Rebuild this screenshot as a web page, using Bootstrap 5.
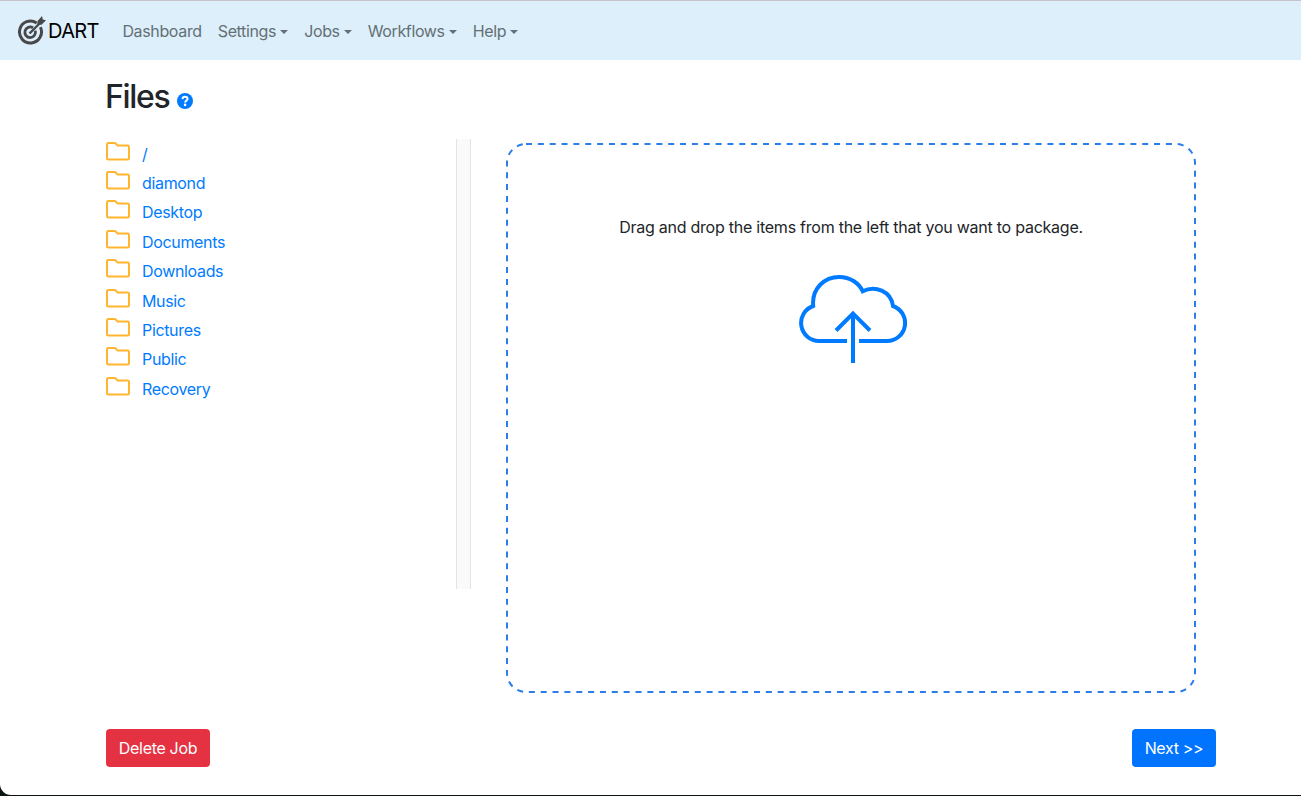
<!DOCTYPE html>
<html lang="en">
<head>
<meta charset="utf-8">
<meta name="viewport" content="width=device-width, initial-scale=1">
<title>DART</title>
<link href="https://cdn.jsdelivr.net/npm/bootstrap@5.3.0/dist/css/bootstrap.min.css" rel="stylesheet">
<style>
  html { background: #0c1413; }
  body { font-family: Inter, "Liberation Sans", sans-serif; font-size: 16px; letter-spacing: -.32px; color: #212529; background: #0c1413; height: 796px; overflow: hidden; }
  .app-window { height: 795px; background: #fff; border-bottom-left-radius: 11px; overflow: hidden; }
  .app-bar { height: 60px; background: #dceffb; border-top: 1px solid #c3c5c7; padding: 0 0 0 17px; }
  .app-bar .navbar-brand { font-size: 20px; letter-spacing: -.6px; color: #000; margin-right: 15.5px; padding: 0; }
  .app-bar .nav-link { color: #646f75; padding: 0 8px; white-space: nowrap; line-height: 24px; letter-spacing: -.36px; }
  .app-bar .dropdown-toggle::after { margin-left: 4px; vertical-align: 3px; }
  .page { width: 1110px; margin-left: 106px; }
  .page h1 { font-size: 32px; line-height: 38px; font-weight: 500; letter-spacing: -1.3px; padding-top: 18px; margin: 0 0 0 -1px; }
  .help { margin: 15px 0 0 7px; }
  .browser { width: 365px; height: 450px; margin-top: 23px; }
  .scroll-track { width: 15px; background: #fafafa; border: solid #e4e4e4; border-width: 0 1px; }
  .folder-list { margin-top: -.3px; }
  .folder { height: 29.4px; gap: 12px; color: #007bff; text-decoration: none; }
  .folder span { line-height: 24px; padding-top: 3px; letter-spacing: -.34px; }
  .folder svg { margin-top: 2px; }
  .drop-zone { width: 690px; height: 550px; margin: 83px 0 0 35px; position: relative; padding-top: 72px; }
  .drop-outline { position: absolute; inset: 0; }
  .drop-zone p { margin-bottom: 35px; line-height: 24px; letter-spacing: -.245px; }
  .drop-zone .cloud { margin-left: 3px; }
  .actions { margin-top: 36px; }
  .actions .btn { height: 38px; border: 0; border-radius: 4px; padding: 0; letter-spacing: inherit; }
  .btn-del { width: 104px; background: #e53242; }
  .btn-next { width: 84px; background: #0073ff; }
</style>
</head>
<body>
<div class="app-window">
  <nav class="navbar app-bar navbar-expand flex-nowrap justify-content-start">
    <a class="navbar-brand d-flex align-items-center" href="#">
      <svg width="31" height="32" viewBox="0 -1 31 32" fill="none" stroke="#484848">
        <path d="M19.7 6.9A11 11 0 1 0 23.4 11.2" stroke-width="3"/>
        <path d="M16 11.8A5.3 5.3 0 1 0 18.2 14.6" stroke-width="2.8"/>
        <path d="M12.5 17.5L24 6" stroke-width="2.4"/>
        <path d="M20.2 8.8L20.6 5 25 0l.8 3.4 3.2.8-4.5 4.6z" fill="#484848" stroke="none"/>
      </svg>
      <span>DART</span>
    </a>
    <div class="navbar-nav">
      <a class="nav-link" href="#">Dashboard</a>
      <a class="nav-link dropdown-toggle" href="#">Settings</a>
      <a class="nav-link dropdown-toggle" href="#">Jobs</a>
      <a class="nav-link dropdown-toggle" href="#">Workflows</a>
      <a class="nav-link dropdown-toggle" href="#">Help</a>
    </div>
  </nav>
  <main class="page">
    <div class="d-flex align-items-start">
      <div>
        <h1 class="d-flex">Files
          <svg class="help" width="16" height="16" viewBox="0 0 16 16"><circle cx="8" cy="8" r="8" fill="#007bff"/><path d="M5.5 6.1C5.6 4.5 6.6 3.8 8 3.8s2.5.8 2.5 2.1c0 1.8-2.3 1.7-2.3 3.5" fill="none" stroke="#fff" stroke-width="2"/><circle cx="8.1" cy="11.9" r="1.3" fill="#fff"/></svg>
        </h1>
        <div class="browser d-flex justify-content-between">
          <div class="folder-list">
            <a class="folder d-flex" href="#"><svg width="24" height="20" viewBox="0 0 24 20"><use href="#folder-shape"/></svg><span>/</span></a>
            <a class="folder d-flex" href="#"><svg width="24" height="20" viewBox="0 0 24 20"><use href="#folder-shape"/></svg><span>diamond</span></a>
            <a class="folder d-flex" href="#"><svg width="24" height="20" viewBox="0 0 24 20"><use href="#folder-shape"/></svg><span>Desktop</span></a>
            <a class="folder d-flex" href="#"><svg width="24" height="20" viewBox="0 0 24 20"><use href="#folder-shape"/></svg><span>Documents</span></a>
            <a class="folder d-flex" href="#"><svg width="24" height="20" viewBox="0 0 24 20"><use href="#folder-shape"/></svg><span>Downloads</span></a>
            <a class="folder d-flex" href="#"><svg width="24" height="20" viewBox="0 0 24 20"><use href="#folder-shape"/></svg><span>Music</span></a>
            <a class="folder d-flex" href="#"><svg width="24" height="20" viewBox="0 0 24 20"><use href="#folder-shape"/></svg><span>Pictures</span></a>
            <a class="folder d-flex" href="#"><svg width="24" height="20" viewBox="0 0 24 20"><use href="#folder-shape"/></svg><span>Public</span></a>
            <a class="folder d-flex" href="#"><svg width="24" height="20" viewBox="0 0 24 20"><use href="#folder-shape"/></svg><span>Recovery</span></a>
          </div>
          <div class="scroll-track"></div>
        </div>
      </div>
      <div class="drop-zone text-center">
        <svg class="drop-outline" width="690" height="550" viewBox="0 0 690 550"><rect x="1" y="1" width="688" height="548" rx="19" fill="none" stroke="#2b7de9" stroke-width="2" stroke-dasharray="6 5.85"/></svg>
        <p>Drag and drop the items from the left that you want to package.</p>
        <svg class="cloud" width="108" height="90" viewBox="799 274 108 90" fill="none" stroke="#007bff" stroke-width="4">
          <path d="M847 341H819A18 18 0 0 1 813.2 306C811.5 288 825 277 839 277 850 277 859 283 862.7 291.3 875 285 891 291 893 306A18 18 0 0 1 887 341H859"/>
          <path d="M853 363V314M836 330.5L853 313.5 870 330.5"/>
        </svg>
      </div>
    </div>
    <div class="actions d-flex justify-content-between">
      <button class="btn btn-danger btn-del">Delete Job</button>
      <button class="btn btn-primary btn-next">Next &gt;&gt;</button>
    </div>
  </main>
</div>
<svg width="0" height="0" class="position-absolute"><defs><path id="folder-shape" d="M2.5 2H8.5Q9.2 2 9.7 2.5L11.7 4.6H21.5Q23 4.6 23 6V17Q23 18.5 21.5 18.5H2.5Q1 18.5 1 17V3.5Q1 2 2.5 2Z" fill="none" stroke="#ffb52e" stroke-width="2"/></defs></svg>
<script src="https://cdn.jsdelivr.net/npm/bootstrap@5.3.0/dist/js/bootstrap.bundle.min.js"></script>
</body>
</html>
